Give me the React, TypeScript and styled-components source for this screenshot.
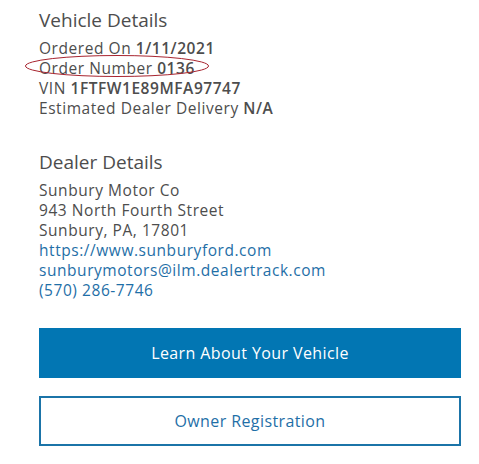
import React from 'react'
import styled, { createGlobalStyle } from 'styled-components'

const GlobalStyle = createGlobalStyle`
  html, body {
    margin: 0;
    padding: 0;
    background: #ffffff;
  }
  body {
    font-family: 'Open Sans', 'Noto Sans', Arial, sans-serif;
    color: #4d4d4d;
  }
`

const Page = styled.div`
  position: relative;
  width: 422px;
  padding: 8px 0 0 39px;
`

const Section = styled.section`
  margin-bottom: 32px;
  &:last-of-type {
    margin-bottom: 28px;
  }
`

const Heading = styled.h2`
  margin: 0 0 6px;
  font-size: 19px;
  line-height: 24px;
  font-weight: 400;
  color: #4d4d4d;
`

const Line = styled.div`
  font-size: 15.5px;
  line-height: 20px;
  letter-spacing: 0.55px;
  color: #4d4d4d;
  & b {
    font-weight: 600;
  }
`

const LinkLine = styled.a`
  display: block;
  font-size: 15.5px;
  line-height: 20px;
  letter-spacing: 0.55px;
  color: #1f6fa7;
  text-decoration: none;
`

const Actions = styled.div`
  display: flex;
  flex-direction: column;
  gap: 18px;
`

const Button = styled.button<{ $variant?: 'solid' | 'outline' }>`
  width: 100%;
  height: 50px;
  font-family: inherit;
  font-size: 16px;
  letter-spacing: 0.4px;
  cursor: pointer;
  border: 2px solid ${({ $variant }) => ($variant === 'outline' ? '#1b74a8' : '#0276b3')};
  background: ${({ $variant }) => ($variant === 'outline' ? '#ffffff' : '#0276b3')};
  color: ${({ $variant }) => ($variant === 'outline' ? '#1f6fa7' : '#ffffff')};
  font-weight: ${({ $variant }) => ($variant === 'outline' ? 400 : 500)};
`

const Circle = styled.svg`
  position: absolute;
  left: 24px;
  top: 54px;
  pointer-events: none;
`

const App: React.FC = () => {
  return (
    <Page>
      <GlobalStyle />
      <Section>
        <Heading>Vehicle Details</Heading>
        <Line>
          Ordered On <b>1/11/2021</b>
        </Line>
        <Line>
          Order Number <b>0136</b>
        </Line>
        <Line>
          VIN <b>1FTFW1E89MFA97747</b>
        </Line>
        <Line>
          Estimated Dealer Delivery <b>N/A</b>
        </Line>
      </Section>
      <Section>
        <Heading>Dealer Details</Heading>
        <Line>Sunbury Motor Co</Line>
        <Line>943 North Fourth Street</Line>
        <Line>Sunbury, PA, 17801</Line>
        <LinkLine href="#">https://www.sunburyford.com</LinkLine>
        <LinkLine href="#">sunburymotors@ilm.dealertrack.com</LinkLine>
        <LinkLine href="#">(570) 286-7746</LinkLine>
      </Section>
      <Actions>
        <Button>Learn About Your Vehicle</Button>
        <Button $variant="outline">Owner Registration</Button>
      </Actions>
      <Circle width="186" height="24" viewBox="0 0 186 24">
        <ellipse cx="93" cy="12" rx="91.5" ry="10.5" fill="none" stroke="#a8242f" strokeWidth="1" />
      </Circle>
    </Page>
  )
}

export default App
